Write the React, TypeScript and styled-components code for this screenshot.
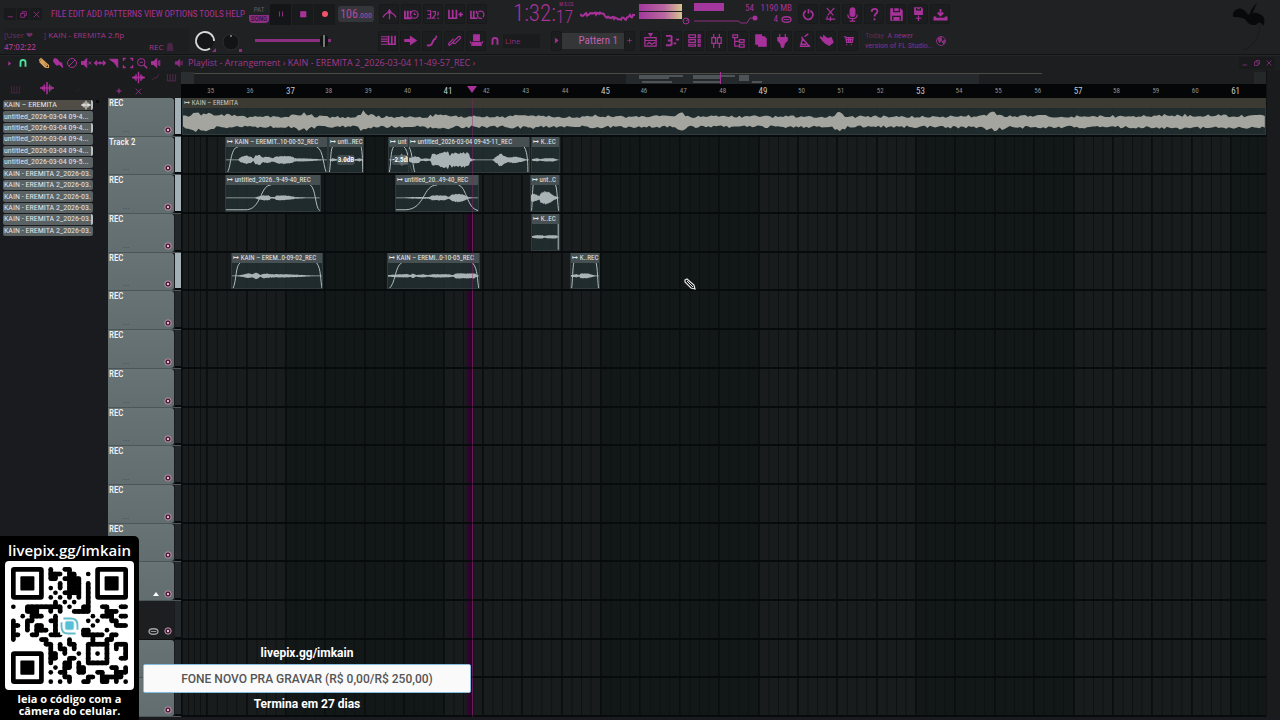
import React from "react";
import styled, { createGlobalStyle, css } from "styled-components";

const pink = "#a8319a";
const pinkDim = "#8c2f80";
const narrow = `"Roboto Condensed", "Noto Sans Condensed", "Open Sans Condensed", sans-serif`;
const ui = `"Open Sans", "Noto Sans", sans-serif`;
const TICKS = 2755;
const pct = (ticks: number) => `${(ticks / TICKS) * 100}%`;

const Global = createGlobalStyle`
  * { box-sizing: border-box; }
  body { margin: 0; background: #1b1d1f; color: ${pink}; font-family: ${ui}; overflow: hidden; }
  button { font: inherit; color: inherit; background: none; border: 0; padding: 0; margin: 0; }
  ul { list-style: none; margin: 0; padding: 0; }
  svg { display: block; }
`;

const Shell = styled.div`
  position: relative;
  display: flex;
  flex-direction: column;
  height: 100vh;
  min-height: 640px;
`;

/* ---------- main toolbar ---------- */
const Toolbar = styled.header`
  display: flex;
  justify-content: space-between;
  height: 55px;
  padding: 1px 12px 0 4px;
  background: #1f2123;
  border-bottom: 1px solid #121315;
`;
const Rows = styled.div`
  display: grid;
  grid-template-rows: 26px 27px;
  white-space: nowrap;
`;
const Row = styled.div`
  display: flex;
  align-items: center;
`;
const Group = styled.div<{ $w: number; $gap?: number; $pad?: number }>`
  display: flex;
  flex: none;
  align-items: center;
  width: ${(p) => p.$w}px;
  gap: ${(p) => p.$gap ?? 2}px;
  padding-left: ${(p) => p.$pad ?? 0}px;
`;
const ToolButton = styled.button<{ $size?: number; $tone?: string }>`
  display: grid;
  place-items: center;
  flex: none;
  width: ${(p) => p.$size ?? 20}px;
  height: 20px;
  color: ${(p) => p.$tone ?? pink};
  background: #1b1d1f;
  border: 1px solid #17191a;
  border-radius: 2px;
`;
const WinButton = styled.button`
  display: grid;
  place-items: center;
  width: 12px;
  height: 12px;
  background: #191a1c;
`;
const Menu = styled.nav`
  display: flex;
  flex: none;
  align-items: center;
  justify-content: space-between;
  width: 194px;
  margin-right: 4px;
  font: 9px/16px ${narrow};
`;
const ModeSwitch = styled.div`
  width: 20px;
  font: 7px/8px ${narrow};
  text-align: center;
  display: grid;
  gap: 1px;
`;
const Mode = styled.button<{ $on?: boolean }>`
  color: ${(p) => (p.$on ? "#2a0d27" : "#5a5d5f")};
  background: ${(p) => (p.$on ? pinkDim : "transparent")};
  border-radius: 0 0 4px 4px;
`;
const Transport = styled.button<{ $deep?: boolean }>`
  display: grid;
  place-items: center;
  width: 21px;
  height: 21px;
  background: ${(p) => (p.$deep ? "#141517" : "#191a1c")};
`;
const Tempo = styled.button`
  width: 36px;
  height: 16px;
  margin-right: 5px;
  color: #b04aa4;
  background: #35363b;
  border-radius: 3px;
  font: 12px/16px ${narrow};
  small { font-size: 8px; }
`;
const Clock = styled.time`
  display: flex;
  font: 300 23px/24px ${narrow};
`;
const Hundredths = styled.span`
  display: grid;
  grid-template-rows: 5px 20px;
  font-size: 18px;
  line-height: 20px;
  small { font: 5px/5px ${narrow}; text-align: right; }
`;
const Meters = styled.div`
  display: grid;
  gap: 1px;
  width: 43px;
  margin-bottom: 6px;
`;
const Meter = styled.div`
  height: 7px;
  background: linear-gradient(90deg, #a3379d, #b968a0 60%, #d8c48e);
`;
const Corner = styled.span`
  align-self: flex-end;
`;
const Cpu = styled.div`
  display: grid;
  grid-template-columns: 60px 38px;
  grid-template-rows: 11px 11px;
  width: 100px;
  font: 9px/11px ${narrow};
  text-align: right;
`;
const CpuTop = styled.div`
  display: flex;
  justify-content: space-between;
`;
const Loads = styled.div`
  display: flex;
  justify-content: flex-end;
  gap: 3px;
`;
const CpuBar = styled.i`
  width: 30px;
  height: 8px;
  background: #a3379d;
`;
const Hint = styled.div`
  display: grid;
  grid-template-columns: 1fr auto;
  width: 185px;
  height: 25px;
  padding: 2px 12px 0 0;
  font: 8px/10px ${ui};
  color: #a1398f;
  background: #1c1e20;
  em { font-style: normal; color: #6c2f63; }
`;
const HintTime = styled.div`
  font-weight: 600;
`;
const Volume = styled.input`
  appearance: none;
  width: 76px;
  height: 12px;
  margin: 0 0 0 12px;
  background: linear-gradient(${pinkDim}, ${pinkDim}) center / 100% 3px no-repeat;
  &::-webkit-slider-thumb {
    appearance: none;
    width: 8px;
    height: 12px;
    border-radius: 4px;
    background: linear-gradient(90deg, #101113 40%, #77777a 40% 60%, #101113 60%);
  }
`;
const Snap = styled.button`
  width: 37px;
  height: 14px;
  background: #191b1c;
  font: 8px/14px ${ui};
  text-align: left;
  color: ${pinkDim};
  padding-left: 2px;
`;
const Pattern = styled.button`
  width: 62px;
  height: 16px;
  padding-right: 6px;
  background: #343638;
  color: #bf62b3;
  font: 11px/16px ${narrow};
  text-align: right;
`;
const News = styled.p`
  width: 70px;
  margin: 0 0 0 7px;
  font: 8px/10px ${narrow};
  color: ${pinkDim};
  em { font-style: normal; color: #5c2c56; }
`;

/* ---------- playlist ---------- */
const TitleBar = styled.div`
  display: flex;
  align-items: center;
  height: 15px;
  padding: 0 5px 0 6px;
  background: #1c1e1f;
  border-top: 1px solid #232527;
`;
const TitleIcons = styled.div`
  display: flex;
  align-items: center;
  gap: 2px;
  width: 168px;
`;
const Title = styled.h1`
  flex: 1;
  margin: 0;
  padding-left: 4px;
  font: 9px/14px ${ui};
  color: #a1398f;
`;
const Playlist = styled.main`
  display: grid;
  flex: 1;
  min-height: 0;
  grid-template-columns: 108px 73px minmax(0, 1fr) 14px;
  grid-template-rows: 28px minmax(0, 1fr);
  padding-bottom: 3px;
  background: #1a1b1e;
`;
const PickerHead = styled.div`
  display: flex;
  align-items: end;
  gap: 19px;
  padding: 0 0 3px 10px;
  background: #1a1c1e;
`;
const TrackTools = styled.div`
  display: grid;
  grid-template-columns: 22px 16px 18px 15px;
  grid-template-rows: 14px 14px;
  place-items: center;
  background: #1a1c1e;
`;
const Picker = styled.aside`
  display: flex;
  align-items: start;
  gap: 3px;
  padding: 2px 0 0 3px;
`;
const PickerList = styled.ul`
  display: grid;
  grid-template-rows: repeat(12, minmax(0, 1fr));
  gap: 1px;
  width: 90px;
  height: 136px;
`;
const PickerItem = styled.li<{ $main?: boolean; $marked?: boolean }>`
  display: flex;
  justify-content: space-between;
  align-items: center;
  padding-left: 1px;
  overflow: hidden;
  white-space: nowrap;
  font: 8px/10px ${narrow};
  color: #e0e3e4;
  border-radius: 2px;
  background: ${(p) => (p.$main ? "#4f4d45" : "#5b6264")};
  border-right: 2px solid ${(p) => (p.$marked ? "#b9bfc0" : "transparent")};
`;
const Dot = styled.i`
  width: 3px;
  height: 3px;
  border-radius: 50%;
  background: #050505;
`;
const RulerArea = styled.div`
  display: grid;
  grid-template-rows: 14px 14px;
`;
const Overview = styled.div`
  background: #1c1e1f;
  svg { width: 100%; height: 14px; }
`;
const barColumns = css`
  display: grid;
  grid-template-columns: 64fr repeat(26, 100fr) 91fr;
`;
const Ruler = styled.div`
  ${barColumns}
  position: relative;
  background: #050607;
`;
const BarNumber = styled.span<{ $strong: boolean }>`
  padding-left: 1px;
  font: ${(p) => (p.$strong ? "9px/14px" : "7px/15px")} ${narrow};
  color: ${(p) => (p.$strong ? "#c3c5c5" : "#8c8f90")};
`;
const TrackHeads = styled.div`
  display: grid;
  grid-template-rows: repeat(16, minmax(0, 1fr));
`;
const TrackHead = styled.div<{ $dark?: boolean; $used?: boolean }>`
  display: grid;
  grid-template-columns: 66px 1fr;
  border-bottom: 1px solid ${(p) => (p.$dark ? "#0d0f10" : "#4c5557")};
  gap: 1px;
  &::after {
    content: "";
    border-bottom: 2px solid #07090a;
    background: ${(p) => (p.$used ? "#a3b0b6" : "#23282a")};
  }
`;
const HeadFace = styled.div<{ $dark?: boolean }>`
  display: flex;
  flex-direction: column;
  justify-content: space-between;
  padding: 0 2px 2px 1px;
  border-radius: 0 3px 3px 0;
  color: #eef1f2;
  font: 500 9px/11px ${narrow};
  background: ${(p) => (p.$dark ? "#1c1e20" : "linear-gradient(#687375, #626d6f)")};
`;
const HeadFoot = styled.div`
  display: flex;
  justify-content: flex-end;
  align-items: center;
  gap: 5px;
  span { width: 36px; font: 8px/8px ${narrow}; color: #3d4547; }
`;
const Timeline = styled.div`
  position: relative;
  overflow: hidden;
  background: #13181a;
`;
const Bars = styled.div`
  ${barColumns}
  position: absolute;
  inset: 0;
`;
const Bar = styled.i<{ $light: boolean }>`
  background:
    linear-gradient(90deg, #0d1112 1px, transparent 1px) 0 0 / 25% 100%,
    ${(p) => (p.$light ? "#181c1d" : "#121718")};
  border-left: 1px solid #0b0e0f;
`;
const Lanes = styled.div`
  position: relative;
  display: grid;
  grid-template-rows: repeat(16, minmax(0, 1fr));
  height: 100%;
`;
const Lane = styled.div`
  position: relative;
  border-bottom: 2px solid #080b0c;
`;
const ClipBox = styled.section<{ $olive?: boolean }>`
  position: absolute;
  top: 0;
  bottom: 0;
  display: flex;
  flex-direction: column;
  overflow: hidden;
  background: rgba(34, 47, 49, 0.82);
  border: 1px solid #303a3c;
  border-top: 0;
  h2 {
    flex: none;
    height: 10px;
    margin: 0;
    padding-left: 1px;
    overflow: hidden;
    white-space: nowrap;
    font: 7px/11px ${narrow};
    color: ${(p) => (p.$olive ? "#c3c2ba" : "#e2e6e6")};
    background: ${(p) => (p.$olive ? "#3c3b33" : "#465052")};
  }
  svg { flex: 1; width: 100%; min-height: 0; }
`;
const Gain = styled.b`
  position: absolute;
  left: 50%;
  top: 18px;
  transform: translateX(-50%);
  padding: 0 1px;
  border-radius: 3px;
  font: 600 7px/10px ${narrow};
  color: #fff;
  background: rgba(80, 90, 92, 0.75);
`;
const Playhead = styled.i`
  position: absolute;
  top: 0;
  bottom: 0;
  left: ${pct(739)};
  width: 8px;
  margin-left: -7px;
  background: linear-gradient(90deg, transparent, rgba(50, 2, 46, 0.85) 40%, rgba(42, 2, 40, 0.85) 87%, #5e174d 88%);
`;
const PlayheadLine = styled.i`
  position: absolute;
  top: 0;
  bottom: 0;
  left: ${pct(739)};
  width: 1px;
  background: rgba(130, 35, 110, 0.4);
`;
const PlayheadMark = styled.i`
  position: absolute;
  left: ${pct(739)};
  top: 2px;
  margin-left: -5px;
  border: 5px solid transparent;
  border-top: 7px solid #a8319a;
`;
const Cursor = styled.div`
  position: absolute;
  left: 46.4%;
  top: 180px;
`;
const Scroll = styled.div`
  background: #191b1d;
  border-left: 1px solid #101213;
`;

/* ---------- stream overlays ---------- */
const Donate = styled.figure`
  position: absolute;
  left: 0;
  bottom: 0;
  width: 139px;
  height: 184px;
  margin: 0;
  padding: 3px 5px 0;
  border-radius: 0 5px 0 0;
  background: #000;
  color: #fff;
  text-align: center;
  strong { display: block; font: 600 15px/22px ${ui}; }
  figcaption { margin-top: 3px; font: 700 11px/12px ${ui}; }
`;
const QrCard = styled.div`
  width: 129px;
  height: 129px;
  padding: 6px;
  border-radius: 4px;
  background: #fff;
`;
const Goal = styled.aside`
  position: absolute;
  left: 143px;
  bottom: 5px;
  width: 328px;
  text-align: center;
  color: #fff;
  font: 700 12px/22px Roboto, sans-serif;
  p { margin: 0; }
  div {
    height: 29px;
    color: #555;
    background: #fafafa;
    border: 1px solid #86bddc;
    border-radius: 2px;
    font: 500 12px/28px Roboto, sans-serif;
  }
`;

/* ---------- icons, 16 units square ---------- */
const shapes: Record<string, React.ReactNode> = {
  min: <path d="M3 12h9" />,
  restore: <path d="M3 6h7v7H3zM6 6V3h7v7h-3" />,
  close: <path d="M3 3l10 10M13 3L3 13" />,
  metronome: <path d="M1 11c3-5 5-5 7-5s4 0 7 5M8 13V4M6 6l2-3 2 3" />,
  wait: <><path d="M1 4v8h7M4 4v8M7 4v3" strokeWidth="2" /><circle cx="11" cy="8" r="4" /><path d="M11 6v2h2" /></>,
  count: <path d="M1 4h4v4H2h3v4H1M7 5h3v3L7 12h3M13 5v3l-1 1M12 12h2" />,
  keysPlus: <path strokeWidth="1.800" d="M1 3v9h8V3M5 3v9M11 8h5M13.500 5.500v5" />,
  keysLoop: <><path strokeWidth="1.800" d="M1 4v8h7M4 4v8M7 4v3" /><path d="M9 5c5-2 7 2 5 6M13 12c-5 1-6-3-4-6" /></>,
  piano: <><path d="M0 4h7M0 6.500h7M0 9h7M0 12h7" /><path strokeWidth="1.800" d="M8 3v9h7V3M11.500 3v9" /></>,
  arrow: <path fill="currentColor" d="M2 7h6V4l6 4-6 4V9H2z" />,
  slide: <path d="M2 13c3 1 5 0 6-3s2-4 4-4M12 3v2" strokeWidth="2" />,
  link: <path d="M7 9l5-5c2-1 3 1 2 2L9 11c-2 1-3 0-2-2zM9 7l-5 5c-1 2-3 1-2-1l5-5" />,
  hat: <><path fill="currentColor" d="M5 2h6v6H5zM4 10h8v3H4z" /><path d="M1 9c3 5 11 5 14 0M2 13h12" /></>,
  magnet: <path strokeWidth="3" d="M4 14V7c0-5 8-5 8 0v7" />,
  playlist: <><path d="M2 5h12v9H2zM2 8h12M4 12l3-2 2 2 4-2" /><path fill="currentColor" d="M6 0h4L8 3z" /></>,
  pianoroll: <path strokeWidth="2" d="M1 3h6M3 8h4M1 13h6M7 3v10M9 11h3M12 7h3" />,
  rack: <path d="M2 2h7v3H2zM2 7h7v3H2zM2 12h7v2H2zM12 2h2v3h-2zM12 7h2v3h-2zM12 12h2v2h-2z" />,
  mixer: <path d="M5 1v4M5 11v5M11 1v4M11 11v5M3 5h4v6H3zM9 5h4v6H9z" />,
  tree: <path d="M2 2h5v3H2zM4 5v9h5M4 9h5M9 7h5v3H9zM9 12h5v3H9z" />,
  files: <path fill="currentColor" d="M3 2h6v2h3l2 2v8H6V12H3z" />,
  plug: <path fill="currentColor" d="M5 1v4M11 1v4M3 5h10v3l-3 3-1 4H7l-1-4-3-3z" />,
  lamp: <path strokeWidth="1.600" d="M3 14h11M4 13l2-7 7 8M6 6L5 4M8 4l4-3M4 12h6" />,
  hand: <path fill="currentColor" d="M1 4l4 2V3l4 3 4-1 2 5-4 3-4-2-3-3z" />,
  cart: <path d="M3 4h2l1 6h6l1-5H5M6 12v1M11 12v1M8 5v5M10 5v5M6 7h7" />,
  power: <path strokeWidth="1.800" d="M8 2v5M5 4c-6 5 1 12 6 8 3-3 2-6-1-8" />,
  cut: <path d="M4 1l7 8M12 1L5 9M5 10l-1 2M3 13h10M8 10v5" />,
  mic: <><rect x="5.500" y="1" width="5" height="9" rx="2.500" fill="currentColor" /><path d="M3 8c0 6 10 6 10 0M8 12v3M5 15h6" /></>,
  help: <path strokeWidth="2" d="M5 5c0-4 7-4 6 0 0 2-3 2-3 5M8 12v2" />,
  save: <><path fill="currentColor" d="M2 2h10l2 2v10H2z" /><path stroke="#1b1d1f" d="M5 1v4h6V1M4 14v-4h8v4" /></>,
  saveNew: <><path fill="currentColor" d="M4 1h7l1 1v6H4z" /><path stroke="#1b1d1f" d="M6 1v2h4V1" /><path d="M8 9v6M5 12h6" /></>,
  exportIt: <><path strokeWidth="2" d="M8 2v7M5 6l3 3 3-3" /><path strokeWidth="3" d="M2 10v3h12v-3" /></>,
  globe: <><circle cx="8" cy="8" r="6" /><path fill="currentColor" d="M4 5l4-2 1 4-3 3zM9 9l4-2-1 5z" /></>,
  pencil: <path strokeWidth="1.600" d="M2 4l2-2 10 9v3h-3zM4 4l8 8M2 6l8 8" />,
  brush: <path fill="currentColor" d="M3 2l4 1 3 4 3 1 1 6-4-4-4 1-4-5z" />,
  ban: <><circle cx="8" cy="8" r="6" /><path d="M4 12l8-8" /></>,
  dial: <><circle cx="8" cy="8" r="6" strokeWidth="2" /><path strokeWidth="2" d="M8 8l4-3" /></>,
  mute: <><path fill="currentColor" d="M2 6h3l4-4v12l-4-4H2z" /><path d="M11 6l4 4M15 6l-4 4" /></>,
  slip: <path strokeWidth="2" d="M1 8h14M4 5L1 8l3 3M12 5l3 3-3 3M8 6v4" />,
  slice: <path fill="currentColor" d="M2 3h11v11l-4-6z" />,
  select: <path strokeWidth="2" d="M2 5V2h3M11 2h3v3M14 11v3h-3M5 14H2v-3" />,
  lens: <><circle cx="7" cy="7" r="5" /><path strokeWidth="2" d="M11 11l4 4" /><path d="M5 7h4" /></>,
  speaker: <><path fill="currentColor" d="M2 6h3l4-4v12l-4-4H2z" /><path d="M11 5v6M13 4v8" /></>,
  wave: <path strokeWidth="1.800" d="M0 8h16M3 6v4M5 4v8M8 1v14M11 4v8M13 6v4" />,
  curve: <path d="M3 12l4-4 2 1 4-6" />,
  keys: <path d="M2 3v10h12V3M6 3v10M10 3v10" />,
  plus: <path strokeWidth="2" d="M8 3v10M3 8h10" />,
  play: <path fill="currentColor" d="M6 4l5 4-5 4z" />,
  pause: <path d="M5 3v10M11 3v10" strokeWidth="2" />,
  stop: <path fill="currentColor" d="M3 3h11v11H3z" />,
  mouth: <><ellipse cx="8" cy="8" rx="6.500" ry="4" strokeWidth="2" /><path d="M4 8h8" /></>,
  metro: <path fill="currentColor" d="M5 2h6l2 12H3z" />,
};
function Icon({ name, size = 16, color }: { name: string; size?: number; color?: string }) {
  return (
    <svg width={size} height={size} viewBox="0 0 16 16" fill="none" color={color} stroke="currentColor" strokeWidth="1.3" aria-hidden="true">
      {shapes[name]}
    </svg>
  );
}
const Tools = ({ names, w, pad }: { names: string[]; w: number; pad?: number }) => (
  <Group $w={w} $pad={pad}>
    {names.map((n) => <ToolButton key={n} aria-label={n}><Icon name={n} size={15} /></ToolButton>)}
  </Group>
);

/* ---------- waveforms ---------- */
type Pt = [number, number];
function noise(i: number) {
  const v = Math.sin(i * 12.9898 + 4.1) * 43758.5453;
  return v - Math.floor(v);
}
function wavePath(env: Pt[], samples: number, mid: number, rough: number) {
  const at = (t: number) => {
    for (let i = 1; i < env.length; i++) {
      if (t <= env[i][0]) {
        const [a, x] = env[i - 1];
        const [b, y] = env[i];
        return x + ((y - x) * (t - a)) / Math.max(b - a, 0.01);
      }
    }
    return env[env.length - 1][1];
  };
  const up: string[] = [];
  const down: string[] = [];
  for (let i = 0; i <= samples; i++) {
    const t = (i / samples) * 100;
    const amp = at(t);
    const x = t.toFixed(2);
    up.push(`${x},${(mid - Math.max(0.4, amp * (1 - rough * noise(i)))).toFixed(2)}`);
    down.unshift(`${x},${(mid + Math.max(0.4, amp * (1 - rough * noise(i + 999)))).toFixed(2)}`);
  }
  return `M${up.join("L")}L${down.join("L")}Z`;
}
interface ClipData { from: number; to: number; name: string; env: Pt[]; fades?: string; gain?: string; olive?: boolean; }
function Clip({ from, to, name, env, fades, gain, olive }: ClipData) {
  return (
    <ClipBox $olive={olive} style={{ left: pct(from), width: pct(to - from) }}>
      <h2>↦ {name}</h2>
      <svg viewBox="0 0 100 28" preserveAspectRatio="none">
        <path d={wavePath(env, olive ? 420 : 110, olive ? 15 : 14, olive ? 0.42 : 0.25)} fill={olive ? "#a4a59e" : "#a9b3b5"} />
        {fades && <path d={fades} fill="none" stroke="#b4bebf" vectorEffect="non-scaling-stroke" />}
      </svg>
      {gain && <Gain>{gain}</Gain>}
    </ClipBox>
  );
}

const songEnv: Pt[] = [[0, 8], [0.6, 8], [1, 14], [1.3, 10], [2, 13], [3, 8], [4, 10], [5, 7], [9, 7], [10.5, 9], [11, 12], [12, 8], [13, 7], [16, 6.500], [16.6, 13], [17.500, 9], [18, 7], [22, 6.500], [24, 10], [25, 7], [30, 7], [32, 9], [33, 7], [37, 6], [38, 10], [39, 7], [45, 7], [46, 11], [47, 7], [53, 7], [60, 7], [60.500, 12], [61.500, 7], [68, 7], [74, 8], [75, 12], [76, 8], [82, 7.500], [90, 7.500], [91, 9], [100, 8]];
const tracks: { name?: string; used?: boolean; dark?: boolean; up?: boolean; clips: ClipData[] }[] = [
  { name: "REC", used: true, clips: [{ from: 3, to: 2755, name: "KAIN – EREMITA", olive: true, env: songEnv }] },
  {
    name: "Track 2", used: true, clips: [
      { from: 112, to: 373, name: "KAIN – EREMIT..10-00-52_REC", env: [[0, 0], [12, 0], [14, 3], [20, 5], [25, 4], [27, 1], [29, 5], [34, 6], [36, 3], [42, 4], [46, 2], [50, 4], [58, 5], [66, 4], [68, 2], [85, 1.500], [100, 0]], fades: "M1 28C5 24 4 0 12 0M90 0C97 2 97 26 100 28" },
      { from: 373, to: 465, name: "unti..REC", gain: "3.0dB", env: [[0, 0], [10, 2], [20, 1], [80, 1], [90, 2], [100, 0]], fades: "M1 28C5 20 4 4 10 0M94 0C98 4 98 20 99 28" },
      { from: 526, to: 594, name: "unt", gain: "-2.5dB", env: [[0, 0], [30, 1], [50, 7], [70, 5], [100, 2]], fades: "M1 28C8 20 6 4 18 0M60 0C80 2 80 26 100 28" },
      { from: 576, to: 886, name: "untitled_2026-03-04 09-45-11_REC", env: [[0, 2], [4, 4], [8, 4], [10, 1], [14, 2], [18, 1], [19, 7], [24, 7], [28, 9], [33, 10], [34, 3], [35, 9], [40, 8], [48, 9], [50, 7], [51, 2], [56, 0], [69, 0], [72, 3], [76, 8], [80, 4], [83, 3], [88, 4], [92, 3], [97, 1], [100, 0]], fades: "M0 0C3 6 3 22 5 28M96 0C99 6 99 20 99 28" },
      { from: 889, to: 962, name: "K..EC", env: [[0, 1], [20, 2], [30, 1], [50, 2], [80, 2], [100, 0]] },
    ],
  },
  {
    name: "REC", used: true, clips: [
      { from: 112, to: 355, name: "untitled_2026..9-49-40_REC", env: [[0, 0], [30, 0], [35, 2], [40, 3], [46, 3], [48, 1], [52, 1], [54, 3], [62, 3], [70, 2], [74, 1], [100, 0]], fades: "M0 27H20C38 28 36 0 48 0M90 0C96 4 95 24 100 28" },
      { from: 543, to: 757, name: "untitled_20..49-40_REC", env: [[0, 0], [20, 1], [40, 1], [44, 3], [60, 3], [64, 1], [68, 4], [75, 5], [82, 4], [88, 1], [100, 0]], fades: "M0 27H12C36 26 32 0 50 0M76 0C86 2 86 26 100 28" },
      { from: 886, to: 962, name: "unt..C", env: [[0, 4], [10, 5], [25, 3], [30, 2], [35, 6], [50, 8], [65, 7], [80, 3], [95, 1], [100, 0]], fades: "M2 28C5 20 5 4 8 0M88 0C94 4 96 24 99 28" },
    ],
  },
  { name: "REC", clips: [{ from: 889, to: 962, name: "K..EC", env: [[0, 1], [15, 2], [40, 2], [45, 1], [60, 2], [90, 2], [100, 0]], fades: "M98 0V28" }] },
  {
    name: "REC", used: true, clips: [
      { from: 127, to: 361, name: "KAIN – EREM..0-09-02_REC", env: [[0, 0], [10, 1], [18, 3], [22, 2], [27, 4], [32, 1], [35, 3], [44, 2], [60, 2], [80, 1], [100, 0]], fades: "M1 28C5 20 4 2 9 0M94 0C99 6 98 20 100 28" },
      { from: 523, to: 759, name: "KAIN – EREMI..0-10-05_REC", env: [[0, 1], [14, 2], [22, 2], [25, 1], [27, 3], [31, 1], [38, 2], [44, 1], [50, 2], [66, 2], [72, 1], [74, 3], [95, 3], [98, 1], [100, 0]], fades: "M1 28C8 24 8 2 15 0M93 0C99 6 98 20 100 28" },
      { from: 988, to: 1064, name: "K..REC", env: [[0, 1], [20, 2], [30, 1], [35, 3], [60, 3], [80, 1], [100, 0]], fades: "M2 28C6 20 6 4 10 0M90 0C95 4 96 24 99 28" },
    ],
  },
  ...Array.from({ length: 7 }, () => ({ name: "REC", clips: [] })),
  { up: true, clips: [] },
  { dark: true, clips: [] },
  { clips: [] },
  { clips: [] },
];
const bars = Array.from({ length: 27 }, (_, i) => 35 + i);
const picker = ["KAIN – EREMITA", "untitled_2026-03-04 09-4...", "untitled_2026-03-04 09-4...", "untitled_2026-03-04 09-4...", "untitled_2026-03-04 09-4...", "untitled_2026-03-04 09-5...", ...Array(6).fill("KAIN - EREMITA 2_2026-03..")];

/* ---------- QR code ---------- */
const qr = [
  "........#..##............",
  "........###.##..#........",
  "........##.####..........",
  "..........#.###.#........",
  "........#.#.###.#........",
  ".........#.####.#........",
  "........#.#.#.#.#........",
  ".........#.#.#..#........",
  "#..########.#..##..##..##",
  "...###..#.#..####...###..",
  "..#.###..#.......#.###.##",
  "#..##...##......#.#..##..",
  "##.#.##..#.......#....###",
  "#..#.###.#.....##...#....",
  "##..##..###....#####.##..",
  "#.....##....#....#..##...",
  ".......##.#.##..#####.###",
  "........#.##.#..#...#.#.#",
  "........##.#..#.#.#.#...#",
  "........##..##..#...#..##",
  "........#..##.#.#####....",
  ".........#.##.##.....##.#",
  "........#.##..##..##..###",
  "...........##...##.#####.",
  "........#.#.#..##..##.#.#",
];
function QrCode() {
  const on = (r: number, c: number) => qr[r]?.[c] === "#";
  const parts: string[] = [];
  qr.forEach((row, r) => [...row].forEach((_, c) => {
    if (!on(r, c)) return;
    parts.push(`M${c * 10} ${r * 10 + 5}a5 5 0 1 0 10 0a5 5 0 1 0-10 0`);
    if (on(r, c + 1)) parts.push(`M${c * 10 + 5} ${r * 10}v10h10v-10z`);
    if (on(r + 1, c)) parts.push(`M${c * 10} ${r * 10 + 5}v10h10v-10z`);
  }));
  const eyes = [[0, 0], [180, 0], [0, 180]];
  return (
    <svg width="117" height="117" viewBox="0 0 250 250" role="img" aria-label="QR code">
      {parts.map((d, i) => <path key={i} d={d} />)}
      {eyes.map(([x, y]) => (
        <g key={`${x}-${y}`}>
          <rect x={x + 5} y={y + 5} width="60" height="60" rx="2" fill="none" stroke="#000" strokeWidth="10" />
          <rect x={x + 20} y={y + 20} width="30" height="30" rx="2" />
        </g>
      ))}
      <rect x="105" y="105" width="40" height="40" fill="#fff" />
      <path d="M112 110h16q14 0 14 14v10M138 142h-16q-14 0-14-14v-10" fill="none" stroke="#62bccb" strokeWidth="4" />
      <rect x="116" y="116" width="18" height="18" rx="4" fill="#55c0d8" stroke="#8fd4df" strokeWidth="2" />
    </svg>
  );
}

const scope = Array.from({ length: 56 }, (_, i) => `${i},${(8 - Math.sin(i / 9) * 2 * (i > 27 ? 0.5 : 1) + (i > 25 && i < 48 ? 2 : 0) + noise(i) * 3).toFixed(1)}`).join(" ");

export default function App() {
  return (
    <>
      <Global />
      <Shell>
        <Toolbar>
          <Rows>
            <Row>
              <Group $w={47} $gap={1}>
                {["min", "restore", "close"].map((n) => <WinButton key={n} aria-label={n}><Icon name={n} size={9} /></WinButton>)}
              </Group>
              <Menu>{["FILE", "EDIT", "ADD", "PATTERNS", "VIEW", "OPTIONS", "TOOLS", "HELP"].map((m) => <button key={m}>{m}</button>)}</Menu>
              <Group $w={89} $gap={1}>
                <ModeSwitch><Mode>PAT</Mode><Mode $on>SONG</Mode></ModeSwitch>
                <Transport $deep aria-label="pause"><Icon name="pause" size={8} color={pinkDim} /></Transport>
                <Transport aria-label="stop"><Icon name="stop" size={8} /></Transport>
                <Transport aria-label="record"><svg width="10" height="10"><circle cx="5" cy="5" r="3" fill="#f0546c" /></svg></Transport>
              </Group>
              <Tempo>106<small>.000</small></Tempo>
              <Tools names={["metronome", "wait", "count", "keysPlus", "keysLoop"]} w={134} />
              <Group $w={67}><Clock>1:32:<Hundredths><small>M:S:CS</small>17</Hundredths></Clock></Group>
              <Group $w={59}><svg width="56" height="20"><polyline points={scope} fill="none" stroke={pink} strokeWidth="2" transform="translate(0 2)" /></svg></Group>
              <Group $w={55} $gap={0}><Meters><Meter /><Meter /></Meters><Corner><Icon name="dial" size={8} /></Corner></Group>
              <Cpu>
                <CpuTop><CpuBar />54</CpuTop><span>1190 MB</span>
                <svg width="64" height="10"><path d="M0 7h44l3 2h6l3-5h4" fill="none" stroke={pinkDim} /><circle cx="61" cy="4" r="2.500" fill={pink} /></svg>
                <Loads>4 <Icon name="mouth" size={11} /></Loads>
              </Cpu>
              <Tools names={["power", "cut", "mic", "help", "save", "saveNew", "exportIt"]} w={160} pad={4} />
            </Row>
            <Row>
              <Hint>
                <span><em>[User ❤ &nbsp; &nbsp; ]</em> KAIN - EREMITA 2.flp</span><span />
                <HintTime>47:02:22</HintTime><Group $w={28}>REC<Icon name="metro" size={10} color="#4b2446" /></Group>
              </Hint>
              <Group $w={54} $gap={4} $pad={5}>
                <svg width="22" height="22" viewBox="0 0 22 22"><circle cx="11" cy="11" r="9" fill="#151617" /><path d="M16 18.500A9 9 0 1 1 20 11" fill="none" stroke="#d7d8d8" strokeWidth="1.800" /><path d="M18 22l4-4v4z" fill={pinkDim} /></svg>
                <svg width="22" height="22" viewBox="0 0 22 22"><circle cx="11" cy="12" r="8" fill="#131415" stroke="#2c2e30" /><circle cx="11" cy="6" r="1" fill="#8b8c8c" /><path d="M19 19h3v3h-3z" fill={pinkDim} /></svg>
              </Group>
              <Volume type="range" min={0} max={100} defaultValue={96} aria-label="Main volume" />
              <Group $w={47} />
              <Tools names={["piano", "arrow", "slide", "link", "hat"]} w={112} />
              <Group $w={61} $gap={3}><Icon name="magnet" size={10} /><Snap>Line</Snap></Group>
              <Group $w={89} $gap={0}>
                <ToolButton $size={11} aria-label="previous"><Icon name="play" size={9} /></ToolButton>
                <Pattern>Pattern 1</Pattern>
                <ToolButton $size={11} aria-label="add pattern"><Icon name="plus" size={7} color={pinkDim} /></ToolButton>
              </Group>
              <Tools names={["playlist", "pianoroll", "rack", "mixer", "tree", "files", "plug", "lamp", "hand", "cart"]} w={218} />
              <News><em>Today</em>&nbsp; A newer<br />version of FL Studio..</News>
              <Icon name="globe" size={12} color={pinkDim} />
            </Row>
          </Rows>
          <svg width="36" height="52" viewBox="0 0 36 52" aria-hidden="true">
            <path d="M1 12C5 6 10 6 15 12l1 2c4-4 13-2 16 3 1 4 0 6-1 8-2-5-5-4-7-1-3 0-8 0-10-5-3-3-9-3-13-3zM18 12c1-4 4-7 7-10l-5 11z" fill="#08090b" />
            <path d="M28 24c0 12-8 24-18 25" fill="none" stroke="#191a1c" />
          </svg>
        </Toolbar>

        <TitleBar>
          <TitleIcons>
            <Icon name="play" size={7} />
            <Group $w={21} $pad={3}><Icon name="magnet" size={10} color="#4fe29a" /></Group>
            <Icon name="pencil" size={12} color="#d9a45a" />
            {["brush", "ban", "mute", "slip", "slice", "select", "lens", "speaker"].map((n) => <Icon key={n} name={n} size={12} />)}
          </TitleIcons>
          <Icon name="speaker" size={10} color={pinkDim} />
          <Title>Playlist - Arrangement › KAIN - EREMITA 2_2026-03-04 11-49-57_REC ›</Title>
          {["min", "restore", "close"].map((n) => <WinButton key={n} aria-label={`${n} playlist`}><Icon name={n} size={8} /></WinButton>)}
        </TitleBar>

        <Playlist>
          <PickerHead>
            <Icon name="keys" size={11} color="#4a2446" /><Icon name="wave" size={14} /><Icon name="curve" size={10} color="#2c2530" />
          </PickerHead>
          <TrackTools>
            <i /><Icon name="wave" size={13} /><Icon name="curve" size={11} color="#5a2a54" /><Icon name="keys" size={11} color="#5a2a54" />
            <Icon name="plus" size={8} /><Icon name="close" size={9} />
          </TrackTools>
          <RulerArea>
            <Overview>
              <svg viewBox="0 0 1085 14" preserveAspectRatio="none">
                <path d="M0 2h13v12H0z" fill="#2b2e2f" />
                <path d="M445 3h353v11H445z" fill="#25292c" />
                <path d="M13 3.500h848" stroke="#4a4b45" />
                <path d="M458 6h44M458 8h30M461 12h30M512 6h42M512 8h28M512 12h28M558 6h10M558 8h10M558 10h10M571 12h10" stroke="#777e81" />
                <path d="M539.500 2v12" stroke={pink} />
                <path d="M1073 2h12v12h-12z" fill="#252829" />
              </svg>
            </Overview>
            <Ruler>
              <i />
              {bars.map((n) => <BarNumber key={n} $strong={n % 4 === 1}>{n}</BarNumber>)}
              <PlayheadMark />
            </Ruler>
          </RulerArea>
          <Scroll />

          <Picker>
            <PickerList>
              {picker.map((name, i) => (
                <PickerItem key={i} $main={i === 0} $marked={[0, 2, 4, 10].includes(i)}>
                  {name}{i === 0 && <Icon name="wave" size={10} color="#e8e9e8" />}
                </PickerItem>
              ))}
            </PickerList>
            <Dot />
          </Picker>
          <TrackHeads>
            {tracks.map((t, i) => (
              <TrackHead key={i} $dark={t.dark} $used={t.used}>
                <HeadFace $dark={t.dark}>
                  <span>{t.name ?? "\u00a0"}</span>
                  <HeadFoot>
                    {t.name && i < 11 && <span>...</span>}
                    {t.up && <svg width="6" height="4"><path d="M0 4l3-4 3 4z" fill="#fff" /></svg>}
                    {t.dark && <Icon name="mouth" size={11} color="#a0a3a4" />}
                    <svg width="8" height="8"><circle cx="4" cy="4" r="3.200" fill="#3c1a2f" stroke="#c59ab3" /><circle cx="4" cy="4" r="1.200" fill="#f0b6d2" /></svg>
                  </HeadFoot>
                </HeadFace>
              </TrackHead>
            ))}
          </TrackHeads>
          <Timeline>
            <Bars>
              <Bar $light />
              {bars.map((n) => <Bar key={n} $light={Math.floor((n - 1) / 4) % 2 === 0} />)}
            </Bars>
            <Playhead />
            <Lanes>
              {tracks.map((t, i) => <Lane key={i}>{t.clips.map((c) => <Clip key={c.from} {...c} />)}</Lane>)}
            </Lanes>
            <PlayheadLine />
            <Cursor>
              <svg width="12" height="12" viewBox="0 0 12 12"><path d="M1 2l2-1 7 6 1 4-4-1-6-6z" fill="#111" stroke="#e6e6e6" strokeWidth="1.200" /><path d="M3 3l6 6" stroke="#e6e6e6" /></svg>
            </Cursor>
          </Timeline>
          <Scroll />
        </Playlist>

        <Donate>
          <strong>livepix.gg/imkain</strong>
          <QrCard><QrCode /></QrCard>
          <figcaption>leia o código com a<br />câmera do celular.</figcaption>
        </Donate>
        <Goal>
          <p>livepix.gg/imkain</p>
          <div>FONE NOVO PRA GRAVAR (R$ 0,00/R$ 250,00)</div>
          <p>Termina em 27 dias</p>
        </Goal>
      </Shell>
    </>
  );
}
